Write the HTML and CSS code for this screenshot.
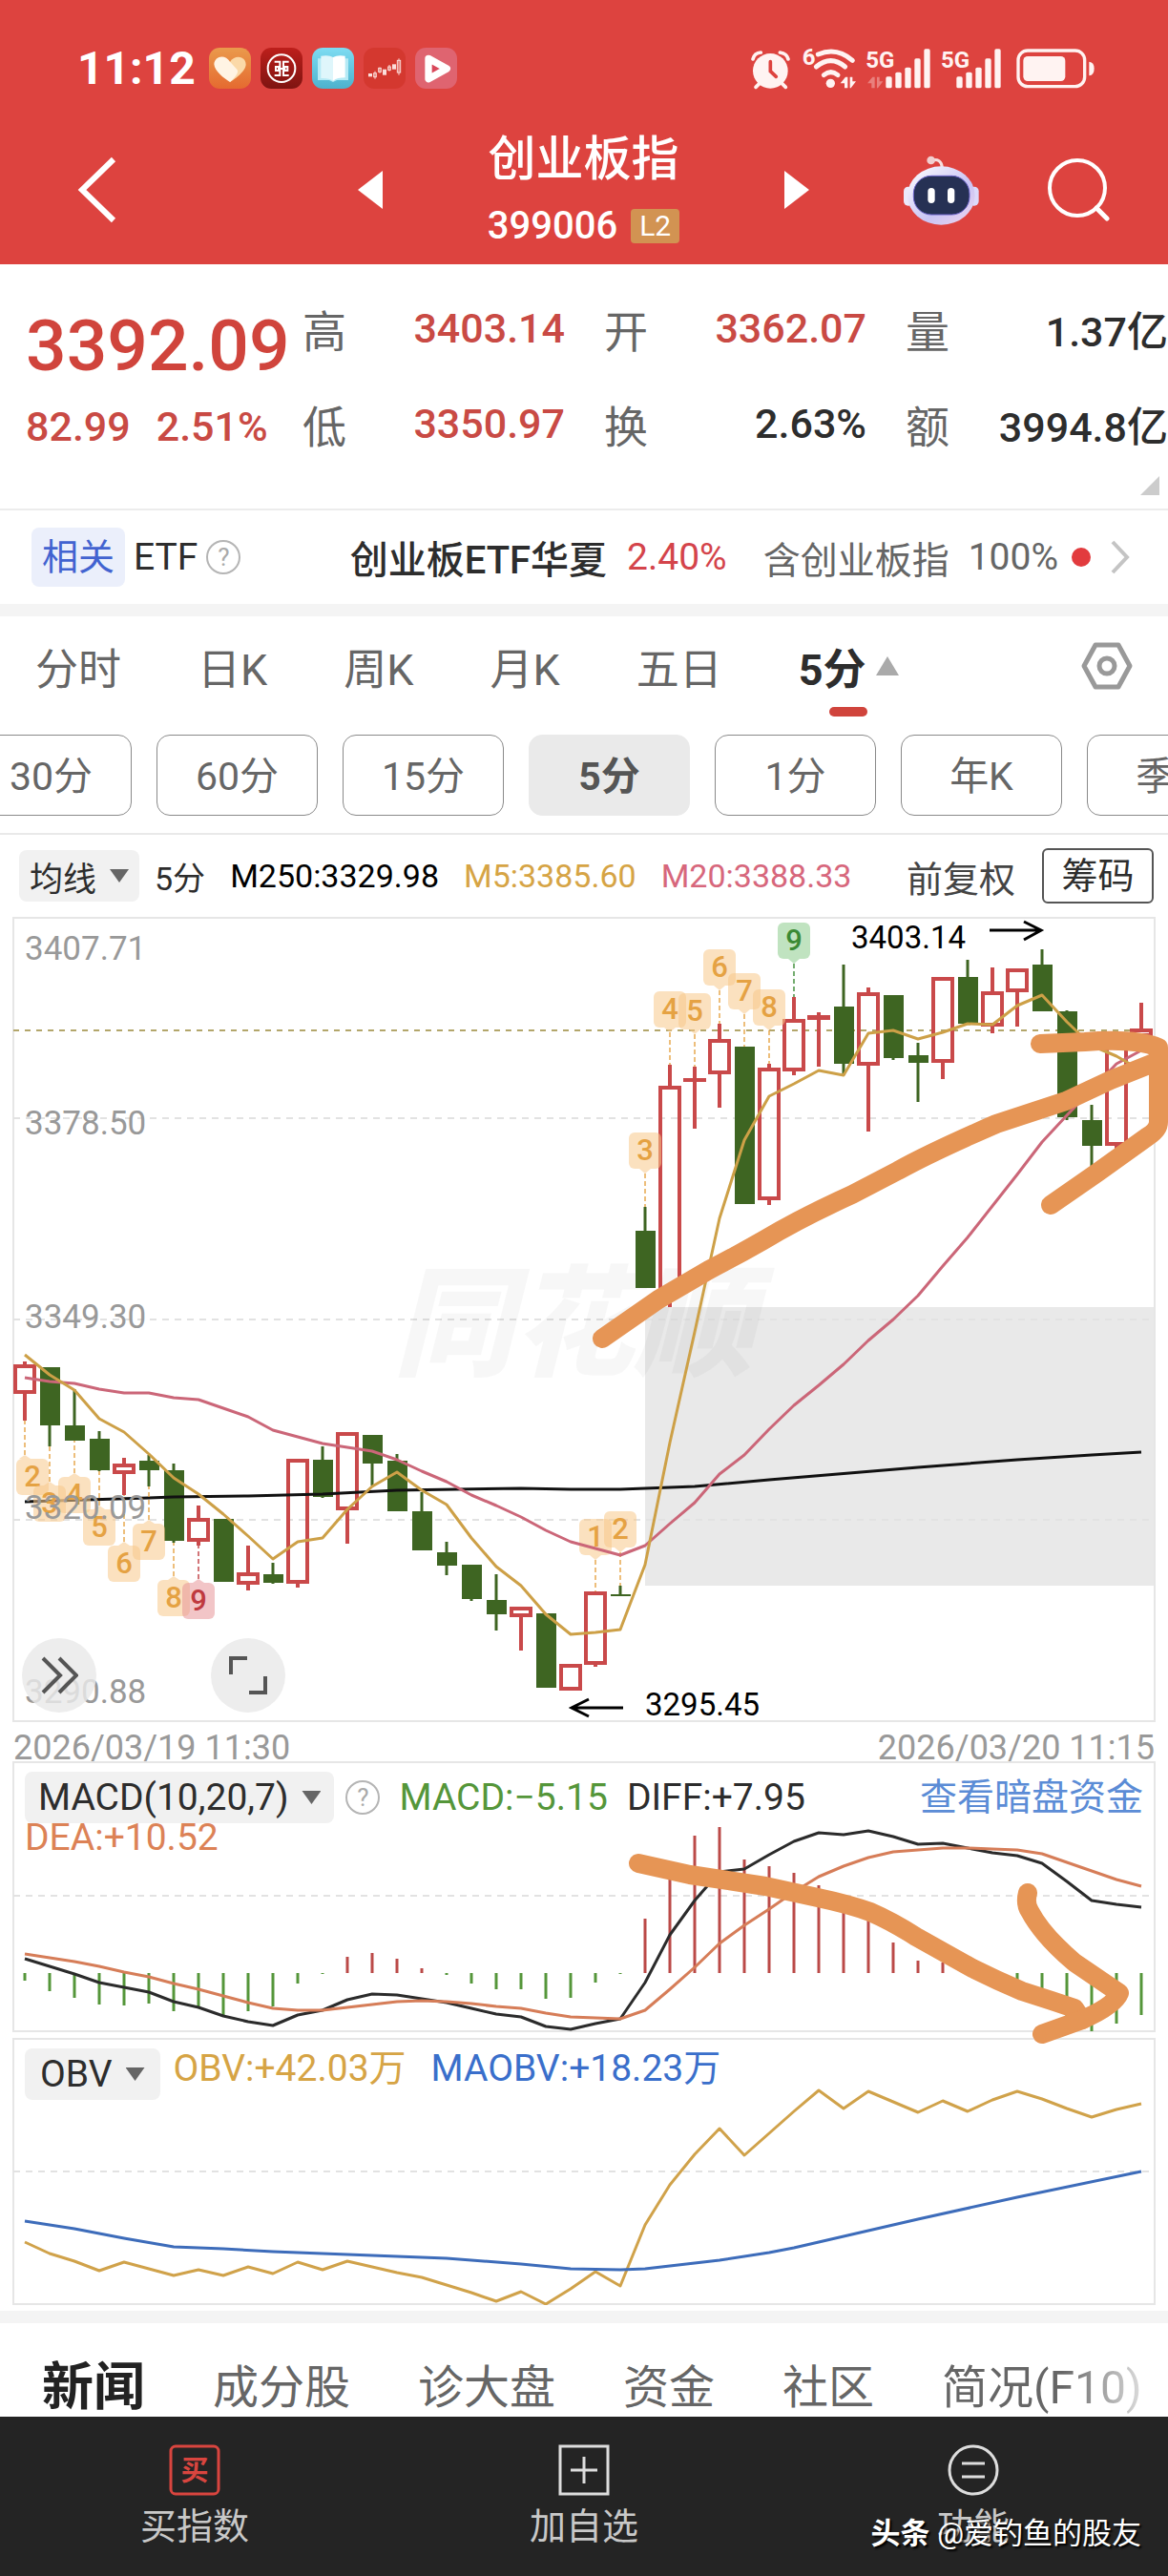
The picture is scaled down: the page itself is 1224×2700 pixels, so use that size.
FILE: index.html
```html
<!DOCTYPE html>
<html lang="zh-CN">
<head>
<meta charset="utf-8">
<meta name="viewport" content="width=device-width, initial-scale=1">
<title>创业板指 399006</title>
<link rel="stylesheet" href="styles.css">
</head>
<body>
<header class="header">
  <div class="status">
    <time class="clock">11:12</time>
    <svg class="app" viewBox="474 60 132 129" aria-hidden="true"><defs><linearGradient id="g1" x1="0" y1="0" x2="0" y2="1"><stop offset="0" stop-color="#ea9a4c"/><stop offset="1" stop-color="#e56a30"/></linearGradient></defs><rect x="474" y="60" width="132" height="129" rx="34" fill="url(#g1)"/><path d="M540 104C556 80 590 86 590 114C588 134 560 156 540 168Z" fill="#fbd9a8"/><path d="M540 168C520 156 492 134 490 112C492 84 526 80 540 104L562 128Q572 138 540 168Z" fill="#fff4e4"/></svg>
    <svg class="app" viewBox="636 60 132 129" aria-hidden="true"><defs><linearGradient id="g2" x1="0" y1="0" x2="0" y2="1"><stop offset="0" stop-color="#bd1f1b"/><stop offset="1" stop-color="#7e1411"/></linearGradient></defs><rect x="636" y="60" width="132" height="129" rx="34" fill="url(#g2)"/><g fill="none" stroke="#fff" stroke-width="6"><circle cx="702" cy="125" r="43"/><path d="M680 104H697V120H684V132H697V147H680M725 104H708V120H721V132H708V147H725M690 126H715"/></g></svg>
    <svg class="app" viewBox="798 60 132 129" aria-hidden="true"><defs><linearGradient id="g3" x1="0" y1="0" x2="0" y2="1"><stop offset="0" stop-color="#7edcf2"/><stop offset="1" stop-color="#4db2cd"/></linearGradient></defs><rect x="798" y="60" width="132" height="129" rx="34" fill="url(#g3)"/><path d="M816 94H912V162H876L864 168L852 162H816Z" fill="#b6eaf5"/><path d="M826 86Q852 82 864 90V164Q850 154 826 156Z" fill="#dff6fb"/><path d="M864 90Q878 82 902 86V154Q878 154 864 164Z" fill="#fff"/></svg>
    <svg class="app" viewBox="960 60 132 129" aria-hidden="true"><rect x="960" y="60" width="132" height="129" rx="34" fill="#d4382f"/><g fill="none" stroke="#fbdedb" stroke-width="3"><path d="M976 146h10M996 134v24M1011 122v18M1041 114v20M1071 94v52"/><rect x="992" y="140" width="8" height="12"/><rect x="1007" y="124" width="8" height="12"/><rect x="1037" y="120" width="8" height="10"/><rect x="1066" y="100" width="10" height="38"/></g><g fill="#fbdedb"><rect x="975" y="141" width="12" height="10"/><rect x="1020" y="128" width="12" height="18"/><rect x="1050" y="112" width="12" height="16"/></g></svg>
    <svg class="app" viewBox="1122 60 132 129" aria-hidden="true"><rect x="1122" y="60" width="132" height="129" rx="34" fill="#df6470"/><path d="M1164 94L1222 126L1164 158Z" fill="#d9475a" stroke="#fff" stroke-width="22" stroke-linejoin="round"/></svg>
    <svg class="system" viewBox="45 50 1095 141" role="img" aria-label="闹钟 WiFi 5G 电池">
      <g fill="#fff3f2" stroke-linecap="round">
        <circle cx="112" cy="129" r="55"/>
        <path d="M112 100V130L130 147" fill="none" stroke="#dd433f" stroke-width="11"/>
        <path d="M57 92Q62 72 82 71M142 71Q164 74 168 92M78 168L66 180M148 168L160 180" fill="none" stroke="#fff3f2" stroke-width="11"/>
        <g fill="none" stroke="#fff3f2" stroke-width="15"><path d="M262 77Q320 52 370 96"/><path d="M256 116Q302 78 347 116"/><path d="M280 142Q302 124 324 142"/></g>
        <circle cx="301" cy="168" r="14"/>
        <path d="M332 168L348 148H355V183H345V168ZM362 148H370V162H381L365 183H362Z"/>
        <path d="M417 168L433 148H440V183H430V168ZM447 148H455V162H466L450 183H447Z" opacity=".35"/>
        <rect x="475" y="147" width="19" height="36" rx="5"/><rect x="505" y="133" width="19" height="50" rx="5"/><rect x="535" y="118" width="19" height="65" rx="5"/><rect x="565" y="90" width="19" height="93" rx="5"/><rect x="595" y="60" width="19" height="123" rx="5"/>
        <rect x="697" y="147" width="19" height="36" rx="5"/><rect x="727" y="133" width="19" height="50" rx="5"/><rect x="757" y="118" width="19" height="65" rx="5"/><rect x="787" y="90" width="19" height="93" rx="5"/><rect x="817" y="60" width="19" height="123" rx="5"/>
        <rect x="891" y="65" width="209" height="113" rx="30" fill="none" stroke="#fff3f2" stroke-width="10"/><rect x="907" y="83" width="132" height="78" rx="14"/><path d="M1114 100Q1130 102 1130 121Q1130 142 1114 144Z"/>
      </g>
      <g fill="#fff3f2" class="system-text"><text x="212" y="110">6</text><text x="412" y="120">5G</text><text x="648" y="120">5G</text></g>
    </svg>
  </div>
  <nav class="nav">
    <div class="nav-side">
      <button class="icon-btn" aria-label="返回"><svg width="43" height="70" viewBox="0 0 43 70"><path d="M38 3L5 35L38 67" fill="none" stroke="#fff" stroke-width="6"/></svg></button>
      <button class="icon-btn" aria-label="上一个"><svg width="26" height="40" viewBox="0 0 26 40"><path d="M26 0V40L0 20Z" fill="#fff"/></svg></button>
    </div>
    <div class="title">
      <h1>创业板指</h1>
      <p><span>399006</span><span class="level">L2</span></p>
    </div>
    <div class="nav-side">
      <button class="icon-btn" aria-label="下一个"><svg width="26" height="40" viewBox="0 0 26 40"><path d="M0 0V40L26 20Z" fill="#fff"/></svg></button>
      <div class="nav-tools">
        <button class="icon-btn" aria-label="智能助手"><svg width="80" height="75" viewBox="530 385 240 225"><defs><linearGradient id="g4" x1="0" y1="0" x2="1" y2="1"><stop offset="0" stop-color="#fff"/><stop offset=".6" stop-color="#c9c4f4"/><stop offset="1" stop-color="#efd6ee"/></linearGradient></defs><path d="M620 403Q652 396 654 426" fill="none" stroke="#f7dede" stroke-width="9"/><circle cx="619" cy="403" r="13" fill="#f1cfd0"/><rect x="533" y="486" width="30" height="60" rx="14" fill="#ece9fb"/><rect x="739" y="486" width="30" height="60" rx="14" fill="#dcd9fa"/><ellipse cx="651" cy="514" rx="106" ry="92" fill="url(#g4)"/><rect x="564" y="452" width="176" height="122" rx="56" fill="#263154" stroke="#6a62c9" stroke-width="3"/><rect x="609" y="490" width="22" height="48" rx="11" fill="#fff"/><rect x="671" y="490" width="22" height="48" rx="11" fill="#fff"/></svg></button>
        <button class="icon-btn" aria-label="搜索"><svg width="66" height="66" viewBox="0 0 66 66"><circle cx="31" cy="31" r="29" fill="none" stroke="#fff" stroke-width="4"/><path d="M51 52L62 63" stroke="#fff" stroke-width="5" stroke-linecap="round"/></svg></button>
      </div>
    </div>
  </nav>
</header>

<main>
<section class="quote">
  <div class="price">3392.09</div>
  <span class="label">高</span><span class="value up">3403.14</span>
  <span class="label">开</span><span class="value up">3362.07</span>
  <span class="label">量</span><span class="value">1.37亿</span>
  <div class="change"><span>82.99</span><span>2.51%</span></div>
  <span class="label">低</span><span class="value up">3350.97</span>
  <span class="label">换</span><span class="value">2.63%</span>
  <span class="label">额</span><span class="value">3994.8亿</span>
  <svg class="corner" width="20" height="20" viewBox="0 0 20 20" aria-hidden="true"><path d="M20 0V20H0Z" fill="#ccc"/></svg>
</section>

<a class="etf" href="#etf">
  <span class="tag">相关</span><span class="etf-word">ETF</span><span class="help">?</span>
  <span class="etf-name">创业板ETF华夏</span><span class="etf-rate">2.40%</span>
  <span class="etf-note">含创业板指</span><span class="etf-note">100%</span><span class="dot"></span>
  <svg width="20" height="36" viewBox="0 0 20 36" aria-hidden="true"><path d="M2 2L17 18L2 34" fill="none" stroke="#c4c4c4" stroke-width="4"/></svg>
</a>

<nav class="periods">
  <button>分时</button><button>日K</button><button>周K</button><button>月K</button><button>五日</button>
  <button class="current">5分<svg width="24" height="20" viewBox="0 0 24 20" aria-hidden="true"><path d="M12 0L24 20H0Z" fill="#aaa"/></svg></button>
  <button class="settings" aria-label="设置"><svg width="54" height="50" viewBox="0 0 54 50"><path d="M15 3H39L51 25L39 47H15L3 25Z" fill="none" stroke="#999" stroke-width="5" stroke-linejoin="round"/><circle cx="27" cy="25" r="8" fill="none" stroke="#999" stroke-width="5"/></svg></button>
</nav>

<div class="chips">
  <button>30分</button><button>60分</button><button>15分</button><button class="on">5分</button><button>1分</button><button>年K</button><button>季K</button>
</div>

<div class="averages">
  <button class="picker">均线<span class="caret"></span></button>
  <span class="avg-period">5分</span>
  <span class="avg black">M250:3329.98</span><span class="avg gold">M5:3385.60</span><span class="avg pink">M20:3388.33</span>
  <span class="adjust">前复权</span>
  <button class="outline">筹码</button>
</div>

<section class="charts">
  <svg class="plot" id="price" viewBox="0 961 1224 844" role="img" aria-label="5分钟K线"></svg>
  <button class="round forward" aria-label="快进"><svg width="40" height="40" viewBox="0 0 40 40"><path d="M3 2L21 20L3 38M20 2L38 20L20 38" fill="none" stroke="#555" stroke-width="4"/></svg></button>
  <button class="round expand" aria-label="全屏"><svg width="40" height="40" viewBox="0 0 40 40"><path d="M2 19V2H19M38 21V38H21" fill="none" stroke="#555" stroke-width="4"/></svg></button>
  <div class="dates"><time>2026/03/19 11:30</time><time>2026/03/20 11:15</time></div>
  <div class="panel">
    <svg class="plot" id="macd" viewBox="0 1846 1224 284" role="img" aria-label="MACD"></svg>
    <div class="legend">
      <button class="picker">MACD(10,20,7)<span class="caret"></span></button><span class="help">?</span>
      <span class="green">MACD:−5.15</span><span class="dark">DIFF:+7.95</span><a class="link" href="#funds">查看暗盘资金</a>
      <span class="orange">DEA:+10.52</span>
    </div>
  </div>
  <div class="panel">
    <svg class="plot" id="obv" viewBox="0 2136 1224 280" role="img" aria-label="OBV"></svg>
    <div class="legend obv">
      <button class="picker">OBV<span class="caret"></span></button>
      <span class="gold">OBV:+42.03万</span><span class="blue">MAOBV:+18.23万</span>
    </div>
  </div>
  <svg class="marks" viewBox="0 961 1224 1455" aria-hidden="true">
    <g fill="none" stroke="#e69555" stroke-width="20" stroke-linecap="round" stroke-linejoin="round">
      <path d="M631 1403L690 1362L743 1331Q772 1316 800 1300Q840 1276 893 1252L941 1227Q975 1208 1044 1178L1117 1154L1164 1132L1214 1112"/>
      <path d="M1090 1094L1137 1092Q1190 1088 1214 1098V1176Q1214 1184 1203 1191L1150 1229L1101 1263"/>
      <path d="M669 1953L723 1965L802 1977L857 1989Q890 1996 912 2004Q935 2014 960 2030L1019 2063Q1045 2076 1071 2087L1102 2097L1126 2105L1134 2117"/>
      <path d="M1077 1984Q1074 1995 1079 2003Q1092 2028 1126 2057L1173 2089Q1168 2102 1134 2117L1092 2132"/>
    </g>
  </svg>
</section>

<nav class="sections">
  <button class="current">新闻</button><button>成分股</button><button>诊大盘</button><button>资金</button><button>社区</button><button class="fade">简况(F10)</button>
</nav>
</main>

<footer class="toolbar">
  <button><svg width="54" height="54" viewBox="0 0 54 54"><rect x="2" y="2" width="50" height="50" rx="5" fill="none" stroke="#d9453f" stroke-width="3"/><text x="27" y="38" text-anchor="middle" class="buy">买</text></svg>买指数</button>
  <button><svg width="54" height="54" viewBox="0 0 54 54"><path d="M2 2H52V52H2ZM27 13V41M13 27H41" fill="none" stroke="#ddd" stroke-width="3"/></svg>加自选</button>
  <button><svg width="56" height="54" viewBox="0 0 56 54"><circle cx="28" cy="27" r="25" fill="none" stroke="#ddd" stroke-width="3"/><path d="M16 20H40M16 34H40" stroke="#ddd" stroke-width="3"/></svg>功能</button>
  <p class="credit"><b>头条</b> @爱钓鱼的股友</p>
</footer>
<script src="chart.js"></script>
</body>
</html>
```
FILE: styles.css
```css
* { box-sizing: border-box; }
body {
  margin: 0;
  background: #fff;
  color: #2d2d2d;
  font-family: Roboto, "Noto Sans CJK SC", sans-serif;
  overflow-x: hidden;
}
h1, p { margin: 0; }
button {
  margin: 0; padding: 0; border: 0; background: none;
  font: inherit; color: inherit; white-space: nowrap;
}
a { color: inherit; text-decoration: none; }
svg { display: block; flex: none; }

.header { background: #dd433f; color: #fff; height: 277px; padding-top: 48px; }
.status { display: flex; align-items: center; gap: 10px; height: 47px; padding: 0 74px 0 81px; }
.clock { font-size: 48px; font-weight: 700; margin-right: 4px; }
.app { width: 44px; height: 43px; }
.system { width: 365px; height: 47px; margin-left: auto; overflow: visible; }
.system-text { font-size: 72px; font-weight: 700; }
.nav { display: grid; grid-template-columns: 431px 1fr 454px; align-items: center; padding: 42px 60px 0 81px; }
.nav-side { display: flex; justify-content: space-between; align-items: center; }
.nav { grid-template-columns: 320px 1fr 342px; }
.nav-tools { display: flex; align-items: center; gap: 72px; }
.title { text-align: center; }
.title h1 { font-size: 50px; line-height: 60px; font-weight: 500; }
.title p { display: flex; justify-content: center; align-items: center; gap: 14px; margin-top: 16px; font-size: 40px; line-height: 48px; font-weight: 500; }
.level { background: #d29352; border-radius: 4px; padding: 0 9px; font-size: 30px; line-height: 36px; font-weight: 400; }

.quote {
  position: relative;
  display: grid;
  grid-template-columns: 290px 46px 1fr 87px 1fr 87px 1fr;
  grid-template-rows: 100px 100px;
  align-items: center;
  height: 258px;
  padding: 17px 0 0 27px;
  border-bottom: 2px solid #ececec;
  white-space: nowrap;
}
.price { font-size: 75px; font-weight: 500; color: #d0443c; padding-top: 36px; line-height: 74px; }
.change { display: flex; gap: 27px; font-size: 43px; font-weight: 500; color: #c94a44; padding-top: 6px; }
.label { font-size: 46px; color: #666; text-align: right; }
.value { font-size: 43px; font-weight: 500; text-align: right; }
.up { color: #c94a44; }
.corner { position: absolute; right: 9px; bottom: 14px; }

.etf { display: flex; align-items: center; height: 111px; padding: 0 40px 0 33px; border-bottom: 13px solid #f4f4f4; font-size: 39px; white-space: nowrap; }
.tag { background: #ebeffb; color: #4263d0; border-radius: 8px; padding: 0 11px; line-height: 62px; margin-right: 9px; font-size: 38px; }
.help { width: 36px; height: 36px; border: 2px solid #b5b5b5; border-radius: 50%; color: #aaa; font-size: 26px; line-height: 32px; text-align: center; }
.etf .help { margin: 0 auto 0 9px; }
.etf-name { font-size: 40px; font-weight: 500; margin-right: 21px; }
.etf-rate { color: #d4444b; margin-right: 38px; }
.etf-note { color: #666; margin-right: 20px; }
.etf .dot { width: 20px; height: 20px; border-radius: 50%; background: #e23b3e; margin: 0 21px 0 -6px; }

.periods { display: flex; align-items: center; gap: 80px; height: 124px; padding: 0 37px 20px; font-size: 45px; color: #666; }
.periods .current { position: relative; display: flex; align-items: center; gap: 10px; font-weight: 700; color: #2d2d2d; }
.periods .current::after { content: ""; position: absolute; left: 50%; bottom: -20px; width: 40px; height: 10px; margin-left: -20px; border-radius: 5px; background: #d0443c; }
.settings { margin-left: auto; }

.chips { display: flex; gap: 26px; height: 105px; padding-bottom: 20px; margin-left: -31px; overflow: hidden; border-bottom: 2px solid #e9e9e9; }
.chips button { flex: none; width: 169px; height: 85px; padding-bottom: 5px; border: 1px solid #8a8a8a; border-radius: 14px; font-size: 41px; color: #666; }
.chips .on { background: #eaeaea; border-color: #eaeaea; font-weight: 700; color: #555; }

.averages { display: flex; align-items: center; height: 86px; padding: 0 15px 0 20px; font-size: 34px; white-space: nowrap; }
.picker { display: inline-flex; align-items: center; gap: 14px; height: 54px; padding: 0 14px; border-radius: 8px; background: #f1f1f1; color: #2d2d2d; }
.averages .picker { font-size: 35px; padding: 0 11px; }
.caret { width: 20px; height: 14px; background: #666; clip-path: polygon(0 0, 100% 0, 50% 100%); }
.avg-period { margin: 0 26px 0 16px; }
.avg { margin-right: 26px; }
.adjust { margin-left: auto; margin-right: 28px; font-size: 38px; color: #444; }
.outline { width: 117px; height: 58px; border: 2px solid #555; border-radius: 6px; font-size: 38px; line-height: 50px; }
.black { color: #000; }
.gold { color: #d6a445; }
.pink { color: #d7677c; }
.green { color: #55963a; }
.dark { color: #2d2d2d; }
.orange { color: #dc8256; }
.blue { color: #3a6fcb; }

.charts { position: relative; border-bottom: 13px solid #f4f4f4; padding-bottom: 6px; }
.plot { width: 100%; height: auto; }
.dates { display: flex; justify-content: space-between; height: 41px; padding: 5px 14px 0; font-size: 36px; line-height: 44px; color: #999; }
.panel { position: relative; }
.panel + .panel { margin-top: 6px; }
.legend {
  position: absolute; inset: 11px 26px auto;
  display: flex; flex-wrap: wrap; align-items: center; column-gap: 20px;
  font-size: 39px; line-height: 42px; white-space: nowrap;
}
.legend .help { margin: 0 0 0 -8px; }
.legend .link { margin-left: auto; color: #5b8cd6; }
.legend .orange { flex-basis: 100%; line-height: 30px; }
.legend.obv { column-gap: 26px; align-items: flex-start; }
.legend.obv .picker { margin-right: -12px; padding: 0 16px; }
.marks { position: absolute; inset: 0 0 auto; width: 100%; pointer-events: none; }
.round { position: absolute; top: 756px; display: grid; place-items: center; width: 78px; height: 78px; border-radius: 50%; background: rgba(233, 233, 233, .82); }
.forward { left: 23px; }
.expand { left: 221px; }

.axis { font-size: 35px; fill: #999; }
.peak { font-size: 33px; fill: #000; }
.badge { font-size: 31px; font-weight: 500; text-anchor: middle; }
.logo { font: italic 900 126px "Noto Sans CJK SC", sans-serif; fill: #000; fill-opacity: .03; }

.sections { display: flex; align-items: center; gap: 71px; height: 98px; padding: 37px 0 0 44px; overflow: hidden; font-size: 48px; line-height: 59px; color: #666; }
.sections .current { font-size: 54px; font-weight: 700; color: #222; }
.fade { background: linear-gradient(90deg, #666 60%, #ddd); -webkit-background-clip: text; background-clip: text; color: transparent; }

.toolbar { position: relative; display: grid; grid-template-columns: repeat(3, 1fr); height: 167px; background: #242424; color: #c8c8c8; font-size: 38px; }
.toolbar button { display: flex; flex-direction: column; align-items: center; padding-top: 29px; gap: 9px; line-height: 46px; }
.buy { font-size: 29px; font-weight: 700; fill: #d9453f; }
.credit { position: absolute; right: 28px; bottom: 24px; font-size: 31px; line-height: 40px; color: #fff; text-shadow: 2px 2px 2px #000; }
```
FILE: chart.js
```js
const x = i => 26 + 26 * i;
const line = (ys, color, width = 3) =>
  `<polyline points="${ys.map((y, i) => Array.isArray(y) ? `${x(y[0])},${y[1]}` : `${x(i)},${y}`).join(' ')}" fill="none" stroke="${color}" stroke-width="${width}" stroke-linejoin="round"/>`;
const grid = (y, color = '#e2e2e2') => `<path d="M14 ${y}H1210" stroke="${color}" stroke-width="2" stroke-dasharray="7 6"/>`;
const frame = (top, bottom) => `<rect x="14" y="${top + 1}" width="1196" height="${bottom - top - 2}" fill="none" stroke="#e6e6e6" stroke-width="2"/>`;

// direction (1 = up), body top, body bottom, high, low
const candles = [
  [1,1430,1461,1427,1489],[0,1433,1494,1433,1516],[0,1494,1510,1456,1510],[0,1508,1541,1500,1542],[1,1534,1545,1528,1567],
  [0,1531,1541,1525,1558],[0,1541,1615,1534,1617],[1,1591,1616,1578,1620],[0,1592,1658,1592,1658],[1,1648,1661,1620,1667],
  [0,1650,1659,1638,1660],[1,1529,1660,1529,1664],[0,1530,1569,1516,1570],[1,1501,1583,1501,1618],[0,1504,1534,1504,1557],
  [0,1531,1584,1524,1584],[0,1584,1625,1564,1625],[0,1627,1641,1616,1651],[0,1640,1676,1640,1678],[0,1677,1692,1650,1709],
  [1,1684,1695,1684,1730],[0,1691,1769,1691,1769],[1,1744,1772,1744,1772],[1,1668,1745,1668,1747],[0,1671,1673,1662,1673],
  [0,1290,1350,1265,1350],[1,1138,1358,1116,1370],[1,1130,1134,1118,1183],[1,1089,1126,1073,1161],[0,1097,1262,1097,1262],
  [1,1119,1258,1115,1263],[1,1068,1123,1045,1127],[1,1064,1069,1061,1118],[0,1055,1115,1011,1127],[1,1040,1117,1035,1186],
  [0,1043,1109,1043,1111],[0,1106,1114,1093,1155],[1,1024,1114,1024,1131],[0,1024,1073,1006,1073],[1,1039,1076,1014,1083],
  [1,1015,1040,1015,1076],[0,1011,1060,995,1060],[0,1060,1171,1059,1174],[0,1174,1201,1158,1225],[1,1095,1201,1095,1206],
  [1,1078,1087,1051,1087]
];
const candle = ([up, top, bottom, high, low], i) => {
  const c = x(i);
  if (!up) return `<path d="M${c} ${high}V${low}" stroke="#3e6522" stroke-width="3"/><rect x="${c - 10}" y="${top}" width="21" height="${bottom - top}" fill="#3e6522"/>`;
  const body = bottom - top < 6
    ? `<rect x="${c - 12}" y="${top}" width="24" height="${bottom - top}" fill="#c9494a"/>`
    : `<rect x="${c - 10}" y="${top + 2}" width="20" height="${bottom - top - 4}" fill="none" stroke="#c9494a" stroke-width="4"/>`;
  return `<path d="M${c} ${high}V${top}M${c} ${bottom}V${low}" stroke="#c9494a" stroke-width="4"/>` + body;
};

const orange = ['#f8c98b', '#e5a243'];
const badge = ([n, i, top, end, shift = 0, [fill, ink] = orange]) => {
  const c = x(i), up = end < top;
  const tip = up ? top : top + 38, peak = up ? top - 4 : top + 43;
  return `<path d="M${c} ${peak}V${end}" stroke="${ink}" stroke-opacity=".7" stroke-width="2" stroke-dasharray="5 3"/>
    <g fill="${fill}" fill-opacity=".55"><rect x="${c - 17 + shift}" y="${top}" width="34" height="38" rx="6"/><path d="M${c - 6} ${tip}L${c} ${peak}L${c + 6} ${tip}Z"/></g>
    <text class="badge" x="${c + shift}" y="${top + 29}" fill="${ink}">${n}</text>`;
};
const badges = [
  [2,0,1529,1489,8],[3,1,1557,1516],[4,2,1548,1510],[5,3,1582,1542],[6,4,1620,1567],[7,5,1597,1558],[8,6,1656,1617],
  [9,7,1659,1620,0,['#e89599','#bf3a3f']],[1,23,1592,1668],[2,24,1584,1662],[3,25,1187,1265],[4,26,1039,1116],[5,27,1041,1118],
  [6,28,995,1073],[7,29,1020,1097],[8,30,1037,1115],[9,31,967,1045,0,['#8ccc8c','#3b8a34']]
];

const ma5 = [1420,1441,1457,1487,1501,1524,1549,1566,1587,1610,1634,1616,1612,1582,1558,1543,1562,1577,1612,1642,1662,1692,1713,1711,1708,1640,1512,1396,1277,1195,1149,1136,1122,1127,1083,1080,1089,1082,1073,1074,1054,1043,1071,1096,1107,1122];
const ma20 = [1444,1448,1450,1456,1460,1460,1465,1467,1476,1485,1499,1506,1513,1517,1521,1530,1542,1553,1567,1578,1590,1604,1616,1623,1630,1620,1597,1575,1545,1525,1498,1473,1452,1430,1405,1383,1358,1327,1297,1264,1231,1197,1169,1142,1115,1101];
const ma250 = [[0,1574],[5,1570],[6,1569],[9,1568],[12,1566],[15,1562],[20,1560],[22,1561],[24,1561],[27,1558],[30,1551],[36,1538],[40,1530],[43,1525],[45,1522]];

const axis = [['3407.71',1006],['3378.50',1189],['3349.30',1392],['3320.09',1592],['3290.88',1785]];

document.getElementById('price').innerHTML =
  `<rect x="676" y="1370" width="534" height="292" fill="#e9e9e9"/>` +
  frame(961, 1805) + grid(1172) + grid(1383) + grid(1593) +
  `<text class="logo" x="412" y="1432">同花顺</text>` +
  `<path d="M14 1080H1210" stroke="#b3a66b" stroke-width="2" stroke-dasharray="6 6"/>` +
  candles.map(candle).join('') +
  line(ma250, '#111', 3) + badges.map(badge).join('') + line(ma20, '#cb6678', 3) + line(ma5, '#cda047', 3) +
  axis.map(([t, y]) => `<text class="axis" x="26" y="${y}">${t}</text>`).join('') +
  `<text class="peak" x="892" y="994">3403.14</text><text class="peak" x="676" y="1798">3295.45</text>
   <path d="M1037 975H1091M1073 966L1091 975L1073 985M653 1790H599M617 1781L599 1790L617 1799" fill="none" stroke="#000" stroke-width="3"/>`;

const bars = [2076,2087,2094,2101,2102,2100,2108,2104,2112,2108,2103,2079,2069,2051,2047,2053,2063,2070,2079,2085,2085,2095,2094,2078,2069,2011,1960,1924,1915,1949,1956,1963,1976,1997,2010,2036,2055,2057,2067,2070,2080,2095,2115,2129,2121,2112];
const diff = [2053,2061,2069,2078,2083,2088,2098,2104,2113,2119,2123,2112,2107,2096,2090,2091,2095,2099,2105,2111,2114,2124,2127,2121,2116,2078,2028,1992,1962,1959,1944,1930,1921,1923,1919,1925,1933,1932,1937,1942,1945,1953,1972,1992,1996,1999];
const dea = [2048,2052,2056,2061,2067,2072,2079,2085,2092,2099,2105,2107,2107,2104,2101,2098,2097,2098,2100,2103,2105,2110,2114,2115,2116,2107,2085,2062,2037,2018,2001,1983,1967,1956,1947,1941,1939,1937,1937,1938,1939,1943,1952,1961,1970,1977];
document.getElementById('macd').innerHTML =
  frame(1846, 2130) + grid(1987) +
  bars.map((y, i) => `<path d="M${x(i)} 2068V${y}" stroke="${y < 2068 ? '#bb4a48' : '#55963a'}" stroke-width="3"/>`).join('') +
  line(diff, '#2b2b2b') + line(dea, '#d67d58');

const obv = [2350,2362,2370,2380,2371,2378,2385,2379,2385,2376,2383,2371,2379,2370,2376,2382,2387,2395,2403,2412,2402,2415,2399,2381,2396,2332,2290,2258,2231,2259,2236,2213,2191,2210,2192,2203,2214,2202,2213,2201,2192,2200,2210,2219,2211,2205];
const maobv = [[0,2328],[2,2336],[4,2346],[6,2355],[8,2357],[10,2360],[14,2364],[17,2367],[18,2369],[20,2373],[22,2378],[24,2379],[25,2378],[26,2375],[28,2369],[30,2361],[31,2356],[32,2350],[36,2326],[40,2303],[45,2276]];
document.getElementById('obv').innerHTML =
  frame(2136, 2416) + grid(2276) + line(obv, '#d0a24a') + line(maobv, '#3d6cba');
```
